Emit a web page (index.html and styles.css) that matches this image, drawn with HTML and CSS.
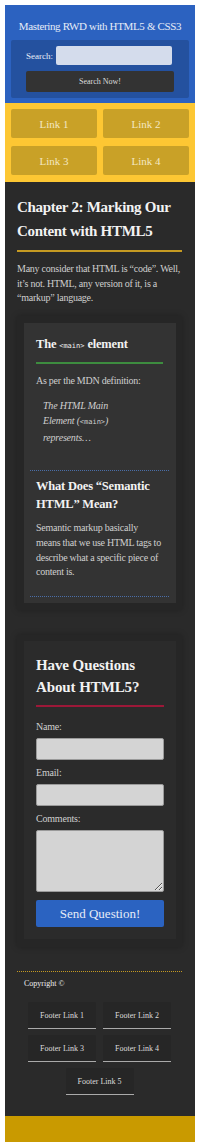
FILE: index.html
```html
<!DOCTYPE html>
<html>
<head>
<meta charset="utf-8">
<link rel="stylesheet" href="styles.css">
</head>
<body>
<header class="masthead">
  <h1 class="site-title">Mastering RWD with HTML5 &amp; CSS3</h1>
  <form class="search">
    <div class="search-row">
      <label class="search-label">Search:</label>
      <input class="search-input" type="text">
    </div>
    <button class="search-btn" type="button">Search Now!</button>
  </form>
</header>
<nav class="nav">
  <a class="nav-link">Link 1</a>
  <a class="nav-link">Link 2</a>
  <a class="nav-link">Link 3</a>
  <a class="nav-link">Link 4</a>
</nav>
<main class="main">
  <h2 class="chapter">Chapter 2: Marking Our Content with HTML5</h2>
  <p class="intro">Many consider that HTML is “code”. Well, it’s not. HTML, any version of it, is a “markup” language.</p>
  <div class="frame">
    <article class="card">
      <section class="sec">
        <h3 class="sec-title">The <code class="code">&lt;main&gt;</code> element</h3>
        <hr class="rule rule-green">
        <p class="sec-text">As per the MDN definition:</p>
        <blockquote class="quote">The HTML Main<br>Element (<code class="code">&lt;main&gt;</code>)<br>represents…</blockquote>
      </section>
      <section class="sec sec2">
        <h3 class="sec-title">What Does “Semantic HTML” Mean?</h3>
        <p class="sec-text">Semantic markup basically means that we use HTML tags to describe what a specific piece of content is.</p>
      </section>
    </article>
  </div>
  <div class="frame frame-form">
    <form class="card form-card">
      <h3 class="form-title">Have Questions About HTML5?</h3>
      <hr class="rule rule-red">
      <label class="field-label">Name:</label>
      <input class="field" type="text">
      <label class="field-label">Email:</label>
      <input class="field" type="text">
      <label class="field-label">Comments:</label>
      <textarea class="field area"></textarea>
      <button class="send" type="button">Send Question!</button>
    </form>
  </div>
  <footer class="footer">
    <p class="copy">Copyright ©</p>
    <ul class="flinks">
      <li><a class="flink">Footer Link 1</a></li>
      <li><a class="flink">Footer Link 2</a></li>
      <li><a class="flink">Footer Link 3</a></li>
      <li><a class="flink">Footer Link 4</a></li>
      <li class="flink-last"><a class="flink">Footer Link 5</a></li>
    </ul>
  </footer>
</main>
<div class="bottom-bar"></div>
</body>
</html>
```
FILE: styles.css
```css
* { box-sizing: border-box; }
html, body { background: #fff; }
body {
  margin: 5px;
  font-family: "Liberation Serif", "DejaVu Serif", serif;
  color: #ddd;
}
.masthead {
  background: #2c62c0;
  padding: 13px 6px 5px;
}
.site-title {
  margin: 0 0 6px;
  font-size: 11px;
  letter-spacing: -0.35px;
  font-weight: normal;
  text-align: center;
  color: #e6ecf7;
  line-height: 16px;
}
.search {
  margin: 0;
  background: #24519f;
  border-radius: 2px;
  padding: 6px 15px 6px;
}
.search-row {
  display: flex;
  align-items: center;
  gap: 3px;
}
.search-label {
  font-size: 9px;
  color: #e6ecf7;
  width: 27px;
  flex: none;
  text-align: right;
}
.search-input {
  flex: 1;
  min-width: 0;
  width: 0;
  height: 19px;
  border: none;
  border-radius: 2px;
  background: #d4dcec;
  margin-right: 2px;
}
.search-btn {
  display: block;
  width: 100%;
  margin-top: 6px;
  height: 21px;
  border: none;
  border-radius: 2px;
  background: #333;
  color: #ddd;
  font-family: "Liberation Serif", serif;
  font-size: 8px;
}
.nav {
  background: #fdc733;
  display: grid;
  grid-template-columns: 1fr 1fr;
  gap: 8px 6px;
  padding: 6px 6px 7px;
}
.nav-link {
  display: flex;
  align-items: center;
  justify-content: center;
  height: 29px;
  background: #c9a127;
  border-radius: 2px;
  color: #f4e8c2;
  font-size: 11px;
}
.main {
  background: #2a2a2a;
  padding: 13px 13px 21px 12px;
}
.chapter {
  margin: 0;
  font-size: 15px;
  letter-spacing: -0.3px;
  line-height: 24px;
  color: #f2f2f2;
  font-weight: bold;
  padding: 0 0 7px;
  border-bottom: 2px solid #c59a22;
}
.intro {
  margin: 10px 0 10px;
  font-size: 10px;
  letter-spacing: -0.25px;
  line-height: 14.5px;
  color: #cfcfcf;
}
.frame {
  padding: 7px 6px 7px 7px;
  background: #262626;
  box-shadow: 0 0 6px rgba(0,0,0,.25);
}
.card {
  background: #333;
  padding: 0 7px 6px 6px;
}
.sec {
  padding: 12px 6px 12px;
  border-bottom: 1px dotted #4a6ea8;
}
.sec-title {
  margin: 0;
  font-size: 12.5px;
  letter-spacing: -0.2px;
  line-height: 19px;
  color: #f2f2f2;
  font-weight: bold;
}
.code {
  font-family: "DejaVu Sans Mono", monospace;
  font-size: 7px;
  font-weight: normal;
  letter-spacing: 0;
}
.rule {
  border: none;
  height: 2px;
  margin: 6px 0 0;
}
.rule-green { background: #3d8c3f; }
.rule-red { background: #9c1838; }
.sec-text {
  margin: 9px 0 0;
  font-size: 10px;
  letter-spacing: -0.25px;
  line-height: 15px;
  color: #cfcfcf;
}
.quote {
  margin: 10px 20px 13px 7px;
  font-style: italic;
  font-size: 10px;
  letter-spacing: -0.2px;
  line-height: 15px;
  color: #cfcfcf;
}
.quote .code { font-style: normal; }
.sec2 { padding-top: 6px; padding-bottom: 16px; }
.sec2 .sec-title { line-height: 18px; }
.sec2 .sec-text { margin-top: 8.5px; line-height: 14.8px; }
.frame-form { margin-top: 25px; padding: 6px 6px 8px 7px; }
.form-card {
  display: flex;
  flex-direction: column;
  background: #2b2b2b;
  padding: 13px 12px 12px;
  margin: 0;
}
.form-title {
  margin: 0;
  font-size: 15px;
  letter-spacing: -0.1px;
  line-height: 22px;
  color: #f2f2f2;
  font-weight: bold;
}
.form-card .rule { margin-top: 7px; }
.field-label {
  margin-top: 6px;
  font-size: 10px;
  letter-spacing: -0.2px;
  line-height: 14px;
  color: #cfcfcf;
}
.rule + .field-label { margin-top: 13px; }
.field {
  margin-top: 4px;
  height: 22px;
  border: 1px solid #9a9a9a;
  border-radius: 2px;
  background: #d4d4d4;
}
.area {
  height: 62px;
  resize: vertical;
}
.send {
  margin-top: 8px;
  height: 27px;
  border: none;
  border-radius: 2px;
  background: #2b63c1;
  color: #e6ecf7;
  font-family: "Liberation Serif", serif;
  font-size: 13px;
}
.footer {
  margin-top: 24px;
  border-top: 1px dotted #c59a22;
  padding: 0 0 0 7px;
}
.copy {
  margin: 5px 0 0;
  font-size: 8px;
  line-height: 14px;
  color: #eee;
}
.flinks {
  list-style: none;
  margin: 11px 0 0;
  padding: 0 7px 0 0;
  display: grid;
  grid-template-columns: 68px 68px;
  justify-content: center;
  column-gap: 7px;
  row-gap: 6px;
}
.flink {
  display: flex;
  align-items: center;
  justify-content: center;
  height: 27px;
  background: #262626;
  border-bottom: 1px solid #aaa;
  border-radius: 2px 2px 0 0;
  color: #ddd;
  font-size: 8px;
}
.flink-last {
  grid-column: 1 / 3;
  justify-self: center;
  width: 68px;
}
.bottom-bar {
  height: 26px;
  background: #c99a00;
}
```
